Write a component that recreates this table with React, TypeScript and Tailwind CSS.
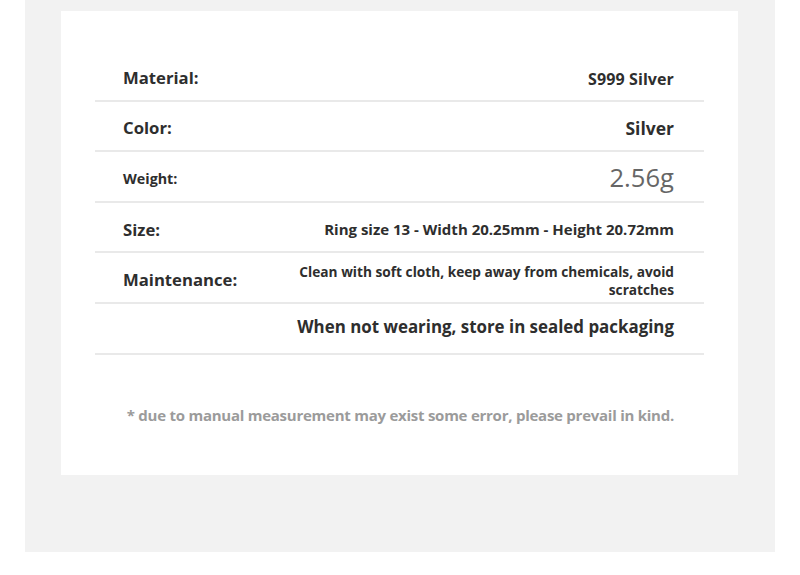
const rows: { label: string; labelClass: string; value: React.ReactNode; valueClass: string }[] = [
  {
    label: "Material:",
    labelClass: "text-[16.7px]",
    value: "S999 Silver",
    valueClass: "text-[16px] tracking-[0.1px] pt-[3px]",
  },
  {
    label: "Color:",
    labelClass: "text-[16.7px]",
    value: "Silver",
    valueClass: "text-[17.5px]",
  },
  {
    label: "Weight:",
    labelClass: "text-[14.3px]",
    value: "2.56g",
    valueClass: "text-[25.6px] font-normal text-[#666]",
  },
  {
    label: "Size:",
    labelClass: "text-[16.7px]",
    value: "Ring size 13 - Width 20.25mm - Height 20.72mm",
    valueClass: "text-[15px]",
  },
  {
    label: "Maintenance:",
    labelClass: "text-[16.7px]",
    value: (
      <>
        Clean with soft cloth, keep away from chemicals, avoid
        <br />
        scratches
      </>
    ),
    valueClass: "text-[13.7px] leading-[18px] pt-[2px]",
  },
  {
    label: "",
    labelClass: "text-[16.7px]",
    value: "When not wearing, store in sealed packaging",
    valueClass: "text-[16.9px] mb-[7px]",
  },
];

export default function App() {
  return (
    <div
      className="w-[800px] h-[575px] bg-white"
      style={{ fontFamily: '"Open Sans", "Liberation Sans", sans-serif' }}
    >
      <div className="ml-[25px] w-[750px] h-[552px] bg-[#f2f2f2] pt-[11px]">
        <div className="ml-[36px] w-[677px] h-[464px] bg-white px-[34px] pt-[40px]">
          <div className="flex flex-col">
            {rows.map((row, i) => (
              <div
                key={i}
                className="h-[50.6px] flex items-center justify-between border-b-2 border-[#e9e9e9] pl-[28px] pr-[30px] pt-[4px] font-bold text-[#2e2e2e]"
              >
                <span className={row.labelClass}>{row.label}</span>
                <span className={`text-right ${row.valueClass}`}>{row.value}</span>
              </div>
            ))}
          </div>
          <p className="mt-[49px] text-right pr-[30px] text-[15px] font-bold text-[#9b9b9b] tracking-[-0.25px]">
            * due to manual measurement may exist some error, please prevail in kind.
          </p>
        </div>
      </div>
    </div>
  );
}
